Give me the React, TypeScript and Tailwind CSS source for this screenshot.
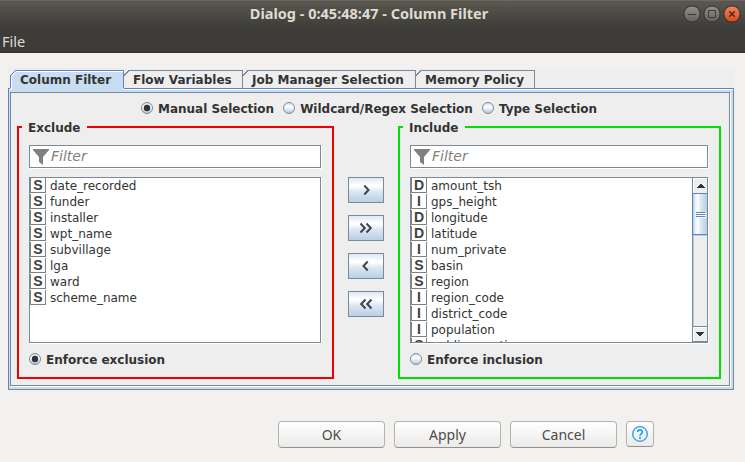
import React from "react";

const excluded = ["date_recorded", "funder", "installer", "wpt_name", "subvillage", "lga", "ward", "scheme_name"];
const included: [string, string][] = [
  ["D", "amount_tsh"],
  ["I", "gps_height"],
  ["D", "longitude"],
  ["D", "latitude"],
  ["I", "num_private"],
  ["S", "basin"],
  ["S", "region"],
  ["I", "region_code"],
  ["I", "district_code"],
  ["I", "population"],
  ["S", "public_meeting"],
];

function WindowButton({ kind }: { kind: "min" | "max" | "close" }) {
  const close = kind === "close";
  return (
    <svg width="18" height="18" viewBox="0 0 18 18">
      <defs>
        <linearGradient id={"wb-" + kind} x1="0" y1="0" x2="0" y2="1">
          <stop offset="0" stopColor={close ? "#f58462" : "#93918a"} />
          <stop offset="1" stopColor={close ? "#dc4a14" : "#62605a"} />
        </linearGradient>
      </defs>
      <circle cx="9" cy="9" r="8.1" fill={`url(#wb-${kind})`} stroke="#33322e" strokeWidth="1" />
      {kind === "min" && <path d="M5 9.5h8" stroke="#3c3b37" fill="none" />}
      {kind === "max" && <path d="M5.5 5.5h7v7h-7z" stroke="#3c3b37" fill="none" />}
      {close && <path d="M6.2 6.2l5.6 5.6M11.8 6.2l-5.6 5.6" stroke="#4b2a1b" strokeWidth="1.5" fill="none" />}
    </svg>
  );
}

function Tab({ label, width, active }: { label: string; width: number; active?: boolean }) {
  const line = active ? "#6382bf" : "#7a8a99";
  return (
    <div className="relative h-[18px] shrink-0" style={{ width }}>
      <svg className="absolute left-0 top-0" width={width} height={active ? 20 : 18} shapeRendering="crispEdges">
        <path d={`M0 20V6L6 0H${width}V20Z`} fill={active ? "#c8ddf2" : "#eeeeee"} />
        {active && <path d={`M1.5 20V6.5L6.5 1.5H${width - 1}`} fill="none" stroke="#fff" />}
        {active ? (
          <path d={`M.5 18V5.5L5.5 .5H${width - 0.5}V18`} fill="none" stroke={line} />
        ) : (
          <path d={`M0 5.5L5 .5H${width - 0.5}V18`} fill="none" stroke={line} />
        )}
      </svg>
      <span className={"relative block whitespace-nowrap text-[12px] leading-[21px] " + (active ? "pl-[10px]" : "pl-[9px]")}>{label}</span>
    </div>
  );
}

function Radio({ label, checked }: { label: string; checked?: boolean }) {
  return (
    <div className="flex h-[14px] items-center gap-[5px] whitespace-nowrap text-[12px] leading-[14px] tracking-[-0.01px]">
      <svg width="12" height="12" viewBox="0 0 12 12" className="shrink-0">
        <defs>
          <linearGradient id="radio-fill" x1="0" y1="0" x2="0" y2="1">
            <stop offset="0" stopColor="#cfdfed" />
            <stop offset=".4" stopColor="#ffffff" />
            <stop offset="1" stopColor="#a9c4de" />
          </linearGradient>
        </defs>
        <circle cx="6" cy="6" r="5.5" fill="url(#radio-fill)" stroke="#7a8a99" />
        {checked && <circle cx="6" cy="6" r="3.2" fill="#333" />}
      </svg>
      <span className="pt-[2px]">{label}</span>
    </div>
  );
}

function FilterField() {
  return (
    <div className="flex h-[23px] items-center border border-[#7a8a99] bg-white pl-[3px] shadow-[1px_1px_0_#fff]">
      <svg width="16" height="16" viewBox="0 0 16 16">
        <path d="M0 0h16v1L10 8v8L6 13V8L0 1Z" fill="#808080" />
      </svg>
      <span className="pb-px pl-[2px] text-[14px] font-normal italic leading-[20px] text-[#808080]">Filter</span>
    </div>
  );
}

function Row({ type, name }: { type: string; name: string }) {
  return (
    <div className="flex h-4 items-center">
      <span className="mb-px flex h-[15px] w-4 shrink-0 items-center justify-center border border-t-0 border-[#808080] bg-white font-['Liberation_Sans',sans-serif] text-[14px] font-bold leading-[14px] text-[#404040]">
        {type}
      </span>
      <span className="whitespace-nowrap pl-1 text-[12px] font-normal leading-4">{name}</span>
    </div>
  );
}

function ScrollBar() {
  return (
    <div className="flex w-[15px] shrink-0 flex-col border-l border-[#7a8a99] bg-[#eeeeee]">
      <div className="flex h-[15px] items-center justify-center border-l border-t border-white">
        <svg width="8" height="4" shapeRendering="crispEdges">
          <path d="M3 0h2v1h1v1h1v1h1v1H0V3h1V2h1V1h1Z" fill="#333" />
        </svg>
      </div>
      <div className="-ml-px flex h-[42px] flex-col items-center justify-center gap-px border border-r-0 border-[#6382bf] bg-[linear-gradient(90deg,#b8cfe5_0_1px,#d8e6f3_1px,#fff_35%,#dce8f3_55%,#b8cfe5)]">
        <i className="h-px w-[9px] bg-[#6382bf] shadow-[1px_1px_0_#fff]" />
        <i className="h-px w-[9px] bg-[#6382bf] shadow-[1px_1px_0_#fff]" />
        <i className="h-px w-[9px] bg-[#6382bf] shadow-[1px_1px_0_#fff]" />
      </div>
      <div className="flex-1 border-l border-t border-[#b8cfe5]" />
      <div className="flex h-4 items-center justify-center border-b border-t border-[#7a8a99] shadow-[inset_1px_1px_0_#fff]">
        <svg width="8" height="4" shapeRendering="crispEdges">
          <path d="M0 0h8v1H7v1H6v1H5v1H3V3H2V2H1V1H0Z" fill="#333" />
        </svg>
      </div>
    </div>
  );
}

function MoveButton({ path }: { path: string }) {
  return (
    <button className="flex h-[26px] w-9 items-center justify-center border border-[#7a8a99] bg-[linear-gradient(180deg,#dde8f3,#fff_30%,#fff_35%,#dce8f3_55%,#b8cfe5)]">
      <svg width="14" height="12" viewBox="0 0 14 12">
        <path d={path} fill="none" stroke="#444444" strokeWidth="2" />
      </svg>
    </button>
  );
}

function DialogButton({ label }: { label: string }) {
  return (
    <button className="h-[27px] w-[107px] rounded-[4px] border border-[#b5b3b0] border-b-[#949290] bg-[linear-gradient(#ffffff,#ebeae9)] font-['Noto_Sans',sans-serif] text-[14px] font-normal leading-[25px] text-[#4c4c4c]">
      {label}
    </button>
  );
}

export default function App() {
  return (
    <div className="flex h-[462px] w-[745px] flex-col overflow-hidden bg-[#f2f1f0] font-['DejaVu_Sans',sans-serif] font-bold text-[#333333]">
      <header className="flex h-[53px] shrink-0 flex-col border-b border-[#34332f] bg-[linear-gradient(#69675a_0_1px,#5a5850_1px,#3e3c38_28px,#3c3b37)] font-['Noto_Sans',sans-serif] text-[#dfdbd2]">
        <div className="grid h-7 grid-cols-[1fr_auto_1fr] items-center">
          <span />
          <h1 className="-ml-[7px] whitespace-nowrap pb-[2px] text-[14.5px] font-bold leading-[26px]">Dialog - 0:45:48:47 - Column Filter</h1>
          <div className="flex justify-end gap-[2px] pr-1">
            <WindowButton kind="min" />
            <WindowButton kind="max" />
            <WindowButton kind="close" />
          </div>
        </div>
        <div className="pl-[2px] text-[14.5px] font-normal leading-[26px]">File</div>
      </header>

      <main className="ml-2 mt-[15px] flex h-[322px] w-[726px] shrink-0 flex-col bg-[#eeeeee] pt-[2px]">
        <nav className="relative z-10 flex h-[18px] pl-[2px]">
          <Tab label="Column Filter" width={114} active />
          <Tab label="Flow Variables" width={119} />
          <Tab label="Job Manager Selection" width={173} />
          <Tab label="Memory Policy" width={119} />
        </nav>
        <div className="flex flex-1 flex-col border border-l-[#6382bf] border-t-[#6382bf] border-b-[#7a8a99] border-r-[#7a8a99] bg-[linear-gradient(#fff_0_1px,#c8ddf2_1px)] pb-[3px] pl-px pr-[3px] pt-[3px]">
          <div className="flex flex-1 flex-col border border-[#7a8a99] bg-[#eeeeee] shadow-[1px_1px_0_#fff]">
            <div className="flex h-[33px] items-start gap-[9px] pl-[130px] pt-2">
              <Radio label="Manual Selection" checked />
              <Radio label="Wildcard/Regex Selection" />
              <Radio label="Type Selection" />
            </div>
            <div className="flex pl-[6px]">
              <fieldset className="relative h-[253px] w-[317px] shrink-0 border-2 border-[#f00000] pl-[10px] pr-[11px] pt-[17px]">
                <span className="absolute -top-[8px] left-[3px] w-[65px] bg-[#eeeeee] pl-[6px] text-[12px] leading-[17px]">Exclude</span>
                <FilterField />
                <div className="mt-[9px] h-[166px] overflow-hidden border border-[#7a8a99] bg-white shadow-[1px_1px_0_#fff]">
                  {excluded.map((name) => (
                    <Row key={name} type="S" name={name} />
                  ))}
                </div>
                <div className="mt-[9px]">
                  <Radio label="Enforce exclusion" checked />
                </div>
              </fieldset>
              <div className="ml-[14px] mt-[51px] flex w-9 shrink-0 flex-col gap-3">
                <MoveButton path="M5.3 1.5L9.5 6L5.3 10.5" />
                <MoveButton path="M1.5 1.5L5.8 6L1.5 10.5M7.5 1.5L11.8 6L7.5 10.5" />
                <MoveButton path="M8.7 1.5L4.5 6L8.7 10.5" />
                <MoveButton path="M6.5 1.5L2.2 6L6.5 10.5M12.5 1.5L8.2 6L12.5 10.5" />
              </div>
              <fieldset className="relative ml-[14px] h-[253px] w-[323px] shrink-0 border-2 border-[#00e000] pl-[10px] pr-[11px] pt-[17px]">
                <span className="absolute -top-[8px] left-[3px] w-[62px] bg-[#eeeeee] pl-[6px] text-[12px] leading-[17px]">Include</span>
                <FilterField />
                <div className="mt-[9px] flex h-[166px] overflow-hidden border border-[#7a8a99] bg-white shadow-[1px_1px_0_#fff]">
                  <div className="flex-1 overflow-hidden">
                    {included.map(([type, name]) => (
                      <Row key={name} type={type} name={name} />
                    ))}
                  </div>
                  <ScrollBar />
                </div>
                <div className="mt-[9px]">
                  <Radio label="Enforce inclusion" />
                </div>
              </fieldset>
            </div>
          </div>
        </div>
      </main>

      <footer className="mt-[31px] flex gap-[9px] pl-[278px]">
        <DialogButton label="OK" />
        <DialogButton label="Apply" />
        <DialogButton label="Cancel" />
        <button className="flex h-[26px] w-7 items-center justify-center rounded-[4px] border border-[#b5b3b0] border-b-[#949290] bg-[linear-gradient(#ffffff,#ebeae9)]">
          <svg width="16" height="16" viewBox="0 0 16 16" fill="none" stroke="#1e9bf0">
            <circle cx="8" cy="8" r="7.3" strokeWidth="1.3" />
            <path d="M5.7 6.1C5.7 3.2 10.4 3.2 10.4 6C10.4 7.9 8 7.8 8 9.7" strokeWidth="1.7" />
            <path d="M8 10.9v1.8" strokeWidth="1.9" />
          </svg>
        </button>
      </footer>
    </div>
  );
}
